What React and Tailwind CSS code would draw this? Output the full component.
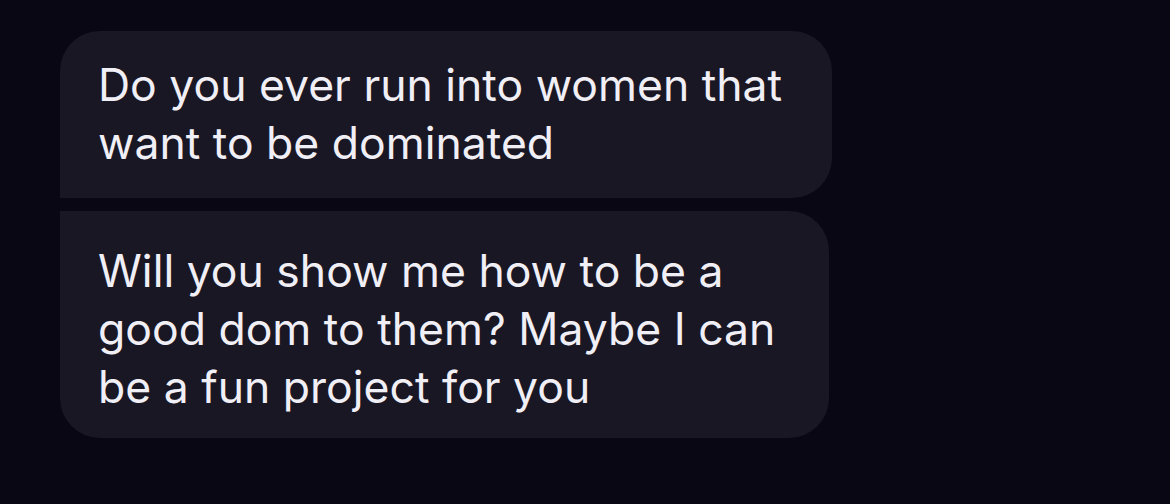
import React from 'react';

const messages = [
  {
    id: 1,
    text: 'Do you ever run into women that want to be dominated',
    shape: 'rounded-t-[40px] rounded-br-[40px] rounded-bl-none pt-[25px] pb-[26px]',
    width: 'w-[772px]',
  },
  {
    id: 2,
    text: 'Will you show me how to be a good dom to them? Maybe I can be a fun project for you',
    shape: 'rounded-b-[40px] rounded-tr-[40px] rounded-tl-none pt-[31px] pb-[22px]',
    width: 'w-[769px]',
  },
];

export default function App() {
  return (
    <div
      className="w-[1170px] h-[504px] bg-[#0a0715] pt-[31px] pl-[60px] flex flex-col gap-[13px]"
      style={{ fontFamily: 'Inter, "Noto Sans", sans-serif' }}
    >
      {messages.map((m) => (
        <div
          key={m.id}
          className={`${m.width} ${m.shape} bg-[#1a1724] pl-[38px] pr-[40px] text-[#f1eff6] text-[44.5px] leading-[58px]`}
        >
          {m.text}
        </div>
      ))}
    </div>
  );
}
